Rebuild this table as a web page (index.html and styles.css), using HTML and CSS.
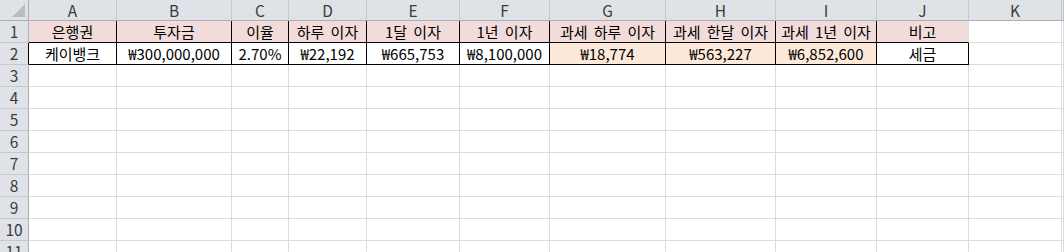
FILE: index.html
```html
<!DOCTYPE html>
<html lang="ko">
<head>
<meta charset="utf-8">
<title>Sheet</title>
<link rel="stylesheet" href="styles.css">
</head>
<body>
<div class="sheet">
  <div class="corner"><span class="tri"></span></div>
  <div class="ch">A</div><div class="ch">B</div><div class="ch">C</div><div class="ch">D</div><div class="ch">E</div><div class="ch">F</div><div class="ch">G</div><div class="ch">H</div><div class="ch">I</div><div class="ch">J</div><div class="ch">K</div><div class="ch last"></div>

  <div class="rh">1</div>
  <div class="c r1 bb br">은행권</div>
  <div class="c r1 bb br">투자금</div>
  <div class="c r1 bb br">이율</div>
  <div class="c r1 bb br">하루 이자</div>
  <div class="c r1 bb br">1달 이자</div>
  <div class="c r1 bb br">1년 이자</div>
  <div class="c r1 bb br">과세 하루 이자</div>
  <div class="c r1 bb br">과세 한달 이자</div>
  <div class="c r1 bb br">과세 1년 이자</div>
  <div class="c r1 bb">비고</div>
  <div class="c"></div><div class="c"></div>

  <div class="rh rh-b">2</div>
  <div class="c bb br">케이뱅크</div>
  <div class="c bb br">₩300,000,000</div>
  <div class="c bb br">2.70%</div>
  <div class="c bb br">₩22,192</div>
  <div class="c bb br">₩665,753</div>
  <div class="c bb br">₩8,100,000</div>
  <div class="c tx bb br">₩18,774</div>
  <div class="c tx bb br">₩563,227</div>
  <div class="c tx bb br">₩6,852,600</div>
  <div class="c bb br">세금</div>
  <div class="c"></div><div class="c"></div>

  <div class="rh">3</div><div class="c"></div><div class="c"></div><div class="c"></div><div class="c"></div><div class="c"></div><div class="c"></div><div class="c"></div><div class="c"></div><div class="c"></div><div class="c"></div><div class="c"></div><div class="c"></div>
  <div class="rh">4</div><div class="c"></div><div class="c"></div><div class="c"></div><div class="c"></div><div class="c"></div><div class="c"></div><div class="c"></div><div class="c"></div><div class="c"></div><div class="c"></div><div class="c"></div><div class="c"></div>
  <div class="rh">5</div><div class="c"></div><div class="c"></div><div class="c"></div><div class="c"></div><div class="c"></div><div class="c"></div><div class="c"></div><div class="c"></div><div class="c"></div><div class="c"></div><div class="c"></div><div class="c"></div>
  <div class="rh">6</div><div class="c"></div><div class="c"></div><div class="c"></div><div class="c"></div><div class="c"></div><div class="c"></div><div class="c"></div><div class="c"></div><div class="c"></div><div class="c"></div><div class="c"></div><div class="c"></div>
  <div class="rh">7</div><div class="c"></div><div class="c"></div><div class="c"></div><div class="c"></div><div class="c"></div><div class="c"></div><div class="c"></div><div class="c"></div><div class="c"></div><div class="c"></div><div class="c"></div><div class="c"></div>
  <div class="rh">8</div><div class="c"></div><div class="c"></div><div class="c"></div><div class="c"></div><div class="c"></div><div class="c"></div><div class="c"></div><div class="c"></div><div class="c"></div><div class="c"></div><div class="c"></div><div class="c"></div>
  <div class="rh">9</div><div class="c"></div><div class="c"></div><div class="c"></div><div class="c"></div><div class="c"></div><div class="c"></div><div class="c"></div><div class="c"></div><div class="c"></div><div class="c"></div><div class="c"></div><div class="c"></div>
  <div class="rh">10</div><div class="c"></div><div class="c"></div><div class="c"></div><div class="c"></div><div class="c"></div><div class="c"></div><div class="c"></div><div class="c"></div><div class="c"></div><div class="c"></div><div class="c"></div><div class="c"></div>
  <div class="rh">11</div><div class="c"></div><div class="c"></div><div class="c"></div><div class="c"></div><div class="c"></div><div class="c"></div><div class="c"></div><div class="c"></div><div class="c"></div><div class="c"></div><div class="c"></div><div class="c"></div>
</div>
</body>
</html>
```

FILE: styles.css
```css
html, body {
  margin: 0;
  padding: 0;
  background: #ffffff;
  overflow: hidden;
}

.sheet {
  display: grid;
  grid-template-columns: 29px 88px 115px 57px 78px 93px 90px 116px 110px 101px 92px 93px 1fr;
  grid-template-rows: 21px repeat(11, 22px);
  width: 100%;
  height: 252px;
  overflow: hidden;
  font-family: "Noto Sans CJK KR", "Noto Sans", sans-serif;
  font-size: 15px;
  word-spacing: 2px;
  color: #000000;
}

.sheet > div {
  box-sizing: border-box;
  display: flex;
  align-items: center;
  justify-content: center;
  white-space: nowrap;
  line-height: 1;
}

.corner {
  background: #dfe3e8;
  border-right: 1px solid #abb0b6;
  border-bottom: 1px solid #abb0b6;
  position: relative;
}

.tri {
  position: absolute;
  left: 12px;
  top: 4px;
  width: 13px;
  height: 13px;
  background: #b9bcc0;
  clip-path: polygon(100% 0, 100% 100%, 0 100%);
}

.ch {
  background: #dfe3e8;
  border-right: 1px solid #c4c8cc;
  border-bottom: 1px solid #abb0b6;
  color: #3b3b3b;
  font-size: 15.5px;
  padding-top: 1px;
}

.rh {
  background: #dfe3e8;
  border-right: 1px solid #abb0b6;
  border-bottom: 1px solid #c4c8cc;
  color: #3b3b3b;
  font-size: 15.5px;
}

.c {
  border-right: 1px solid #dadcdd;
  border-bottom: 1px solid #dadcdd;
}

.r1 {
  background: #f2dcdb;
}

.tx {
  background: #fde9d9;
}

.sheet > .bb {
  border-bottom-color: #000000;
}

.sheet > .br {
  border-right-color: #000000;
}

.sheet > .rh-b {
  border-right-color: #000000;
}
```
